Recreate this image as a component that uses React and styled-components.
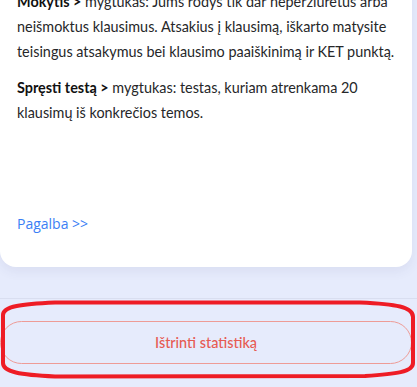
import React from 'react'
import styled, { createGlobalStyle } from 'styled-components';

const GlobalStyle = createGlobalStyle`
  html, body {
    margin: 0;
    padding: 0;
    background: #e6ebfc;
    font-family: "Lato", "Open Sans", sans-serif;
  }
`;

function App() {
  return (
    <>
      <GlobalStyle />
      <Page>
        <Card>
          <Paragraph>
            <b>Mokytis &gt;</b> mygtukas: Jums rodys tik dar neperžiūrėtus arba
            neišmoktus klausimus. Atsakius į klausimą, iškarto matysite
            teisingus atsakymus bei klausimo paaiškinimą ir KET punktą.
          </Paragraph>
          <Paragraph>
            <b>Spręsti testą &gt;</b> mygtukas: testas, kuriam atrenkama 20
            klausimų iš konkrečios temos.
          </Paragraph>
          <HelpLink href="#">Pagalba &gt;&gt;</HelpLink>
        </Card>
        <Footer>
          <DangerButton>Ištrinti statistiką</DangerButton>
        </Footer>
        <Annotation width="417" height="387" viewBox="0 0 417 387">
          <path
            d="M 3 315 C 3 306, 22 304, 55 302.5 L 360 302.5 C 396 304, 413 307, 413 317 L 413 363 C 413 372, 396 374, 365 376 L 55 376.5 C 20 375, 3 372, 3 363 Z"
            fill="none"
            stroke="#ee1c25"
            strokeWidth="4"
          />
        </Annotation>
      </Page>
    </>
  );
}

const Page = styled.div`
  position: relative;
  width: 417px;
  height: 387px;
  overflow: hidden;
  display: flex;
  flex-direction: column;
`;

const Card = styled.div`
  margin: -28px 5px 0 0;
  height: 295px;
  box-sizing: border-box;
  background: #ffffff;
  border-radius: 0 0 16px 16px;
  box-shadow: 0 4px 12px rgba(60, 70, 120, 0.08);
  padding: 17px 8px 34px 17px;
  display: flex;
  flex-direction: column;
`;

const Paragraph = styled.p`
  margin: 0 0 11px 0;
  font-size: 14.4px;
  line-height: 25px;
  color: #262729;
  b {
    font-weight: 700;
    color: #111;
  }
`;

const HelpLink = styled.a`
  margin-top: auto;
  font-family: "Open Sans", "Lato", sans-serif;
  font-size: 14px;
  line-height: 18px;
  font-weight: 500;
  color: #3b7ff5;
  text-decoration: none;
`;

const Footer = styled.div`
  margin-top: 31px;
  border-top: 1px solid #d9def0;
  padding: 22px 5px 0 0;
`;

const DangerButton = styled.button`
  width: 100%;
  height: 43px;
  box-sizing: border-box;
  border: 1px solid #ee9b96;
  border-radius: 22px;
  background: transparent;
  color: #e65a52;
  font-family: "Lato", "Open Sans", sans-serif;
  font-size: 14.4px;
  font-weight: 500;
`;

const Annotation = styled.svg`
  position: absolute;
  top: 0;
  left: 0;
  pointer-events: none;
`;

export default App;
